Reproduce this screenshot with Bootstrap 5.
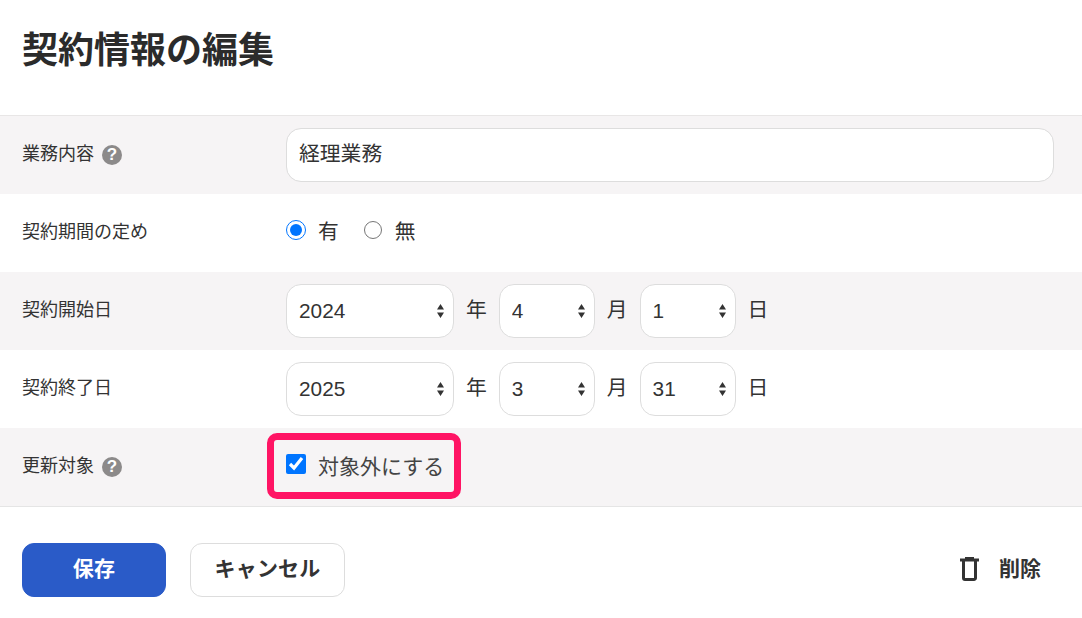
<!DOCTYPE html>
<html lang="ja">
<head>
<meta charset="utf-8">
<title>契約情報の編集</title>
<link href="https://cdn.jsdelivr.net/npm/bootstrap@5.3.0/dist/css/bootstrap.min.css" rel="stylesheet">
<style>
html,body{height:100%;overflow:hidden}
body{font-family:"Liberation Sans","Noto Sans CJK JP",sans-serif;color:#333;background:#fff}
.head-area{height:115px;padding:4px 22px 16px}
.head-area h1{font-size:36px;font-weight:700;line-height:1.3;margin:0;color:#2b2b2b}
.form-rows{border-top:1px solid #e8e6e6;border-bottom:1px solid #e5e5e5}
.form-line{height:78px;padding:0 28px 0 22px}
.form-line:nth-child(odd){background:#f6f4f5}
.line-label{width:264px;flex:none;font-size:18px;line-height:1.3;display:flex;align-items:center}
.help-dot{width:20px;height:20px;border-radius:50%;background:#8c8a8a;color:#fff;font-size:17px;font-weight:700;line-height:20px;text-align:center;margin:0 0 0 8px;font-family:"Liberation Sans",sans-serif}
.ctl{height:54px;font-size:20.8px;color:#333;border:1px solid #ddd;border-radius:15px;padding:0 12px 6px;background-color:#fff;box-shadow:none}
select.ctl{appearance:none;padding:0 12px;background-image:url("data:image/svg+xml,%3Csvg xmlns='http://www.w3.org/2000/svg' width='7' height='14' viewBox='0 0 7 14'%3E%3Cpath fill='%23333' d='M3.5 0 7 5.5H0zM0 8.5h7L3.5 14z'/%3E%3C/svg%3E");background-repeat:no-repeat;background-position:right 9px center;background-size:7px 14px}
.w-year{width:168px;flex:none}
.w-md{width:96px;flex:none}
.unit{font-size:20.8px;margin:0 12px;padding-bottom:2px}
.pick{font-size:21px;line-height:1.3;display:flex;align-items:center;margin:0}
.pick input{appearance:auto;width:20px;height:20px;margin:0 12px 6px 0;flex:none;border:0;float:none;accent-color:#0075ff}
.pick-radio{font-size:20.8px;padding-bottom:3px}
.pick-radio input{margin:0 12px 3px 0}
.pick-radio input:not(:checked){width:18px;height:18px;margin:0 13px 3px 1px}
.pick + .pick{margin-left:24px}
.pick-soft{color:#444}
.alert-wrap{position:relative}
.alert-frame{position:absolute;left:-19px;top:-20px;width:194px;height:66px;border:7px solid #ff1464;border-radius:10px;pointer-events:none}
.foot-area{padding:36px 41px 0 22px}
.act{height:54px;font-size:21px;font-weight:700;border-radius:12px;padding:0 0 3px;line-height:1.2;letter-spacing:.2px}
.act-save{width:144px;background:#2a5bc8;border-color:#2a5bc8;color:#fff}
.act-cancel{width:155px;margin-left:24px;background:#fff;border-color:#ddd;color:#333}
.act-del{background:none;border:0;color:#333;font-size:21px;font-weight:700;padding:0 0 3px;display:flex;align-items:center;gap:20px}
</style>
</head>
<body>
<div class="head-area d-flex align-items-center">
  <h1>契約情報の編集</h1>
</div>
<form class="form-rows">
  <div class="form-line d-flex align-items-center">
    <div class="line-label">業務内容<span class="help-dot">?</span></div>
    <input type="text" class="form-control ctl flex-grow-1" value="経理業務">
  </div>
  <div class="form-line d-flex align-items-center">
    <div class="line-label">契約期間の定め</div>
    <label class="pick pick-radio"><input type="radio" class="form-check-input" name="term" checked>有</label>
    <label class="pick pick-radio"><input type="radio" class="form-check-input" name="term">無</label>
  </div>
  <div class="form-line d-flex align-items-center">
    <div class="line-label">契約開始日</div>
    <select class="form-select ctl w-year"><option>2024</option></select><span class="unit">年</span>
    <select class="form-select ctl w-md"><option>4</option></select><span class="unit">月</span>
    <select class="form-select ctl w-md"><option>1</option></select><span class="unit">日</span>
  </div>
  <div class="form-line d-flex align-items-center">
    <div class="line-label">契約終了日</div>
    <select class="form-select ctl w-year"><option>2025</option></select><span class="unit">年</span>
    <select class="form-select ctl w-md"><option>3</option></select><span class="unit">月</span>
    <select class="form-select ctl w-md"><option>31</option></select><span class="unit">日</span>
  </div>
  <div class="form-line d-flex align-items-center">
    <div class="line-label">更新対象<span class="help-dot">?</span></div>
    <div class="alert-wrap">
      <label class="pick pick-soft"><input type="checkbox" class="form-check-input" checked>対象外にする</label>
      <span class="alert-frame"></span>
    </div>
  </div>
</form>
<div class="foot-area d-flex align-items-center">
  <button type="button" class="btn act act-save">保存</button>
  <button type="button" class="btn act act-cancel">キャンセル</button>
  <button type="button" class="btn act-del ms-auto">
    <svg width="19" height="26" viewBox="0 0 19 26" fill="none" stroke="#333" stroke-width="3"><path d="M0 4H19"/><path d="M5 2H14" stroke-width="2"/><path d="M3.5 4V22a1.5 1.5 0 0 0 1.5 1.5H14a1.5 1.5 0 0 0 1.5-1.5V4"/></svg>
    削除
  </button>
</div>
<script src="https://cdn.jsdelivr.net/npm/bootstrap@5.3.0/dist/js/bootstrap.bundle.min.js"></script>
</body>
</html>
